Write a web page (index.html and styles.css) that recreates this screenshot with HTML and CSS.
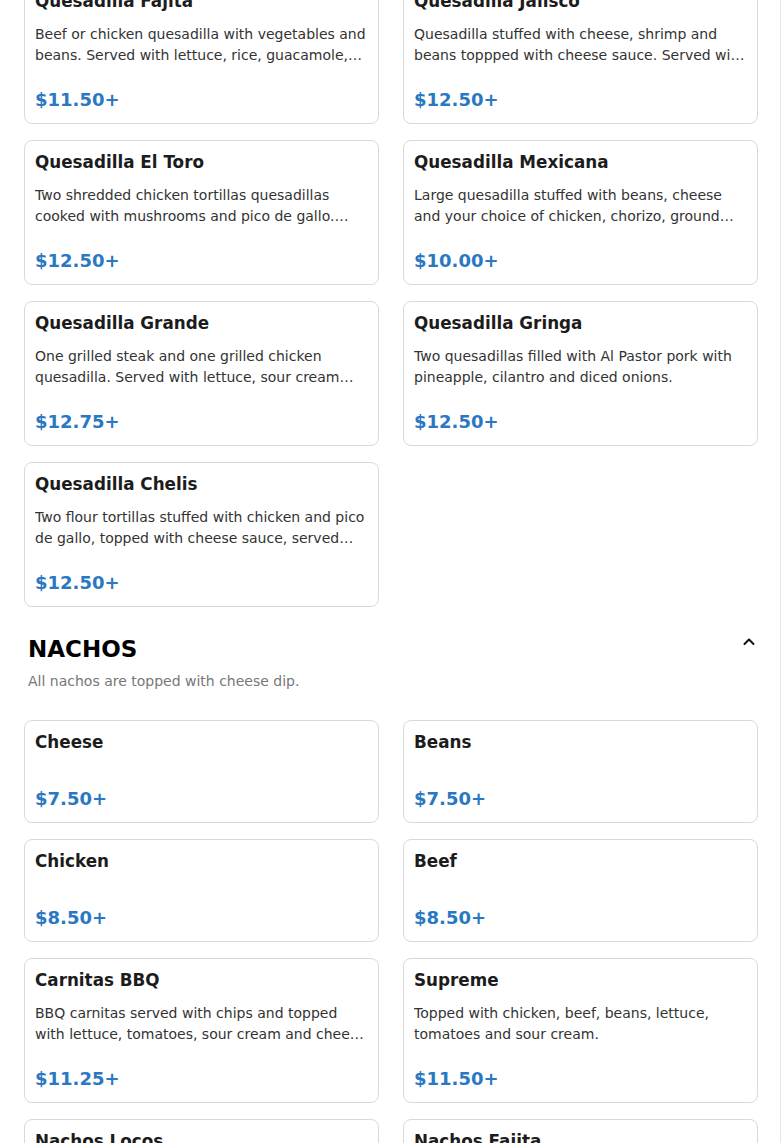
FILE: index.html
```html
<!DOCTYPE html>
<html lang="en">
<head>
<meta charset="utf-8">
<title>Menu</title>
<link rel="stylesheet" href="styles.css">
</head>
<body>
<div class="page">
  <section class="section section-first">
    <div class="grid">
      <div class="card">
        <h3 class="item-title">Quesadilla Fajita</h3>
        <p class="item-desc">Beef or chicken quesadilla with vegetables and beans. Served with lettuce, rice, guacamole, sour cream and pico de gallo.</p>
        <div class="item-price">$11.50+</div>
      </div>
      <div class="card">
        <h3 class="item-title">Quesadilla Jalisco</h3>
        <p class="item-desc">Quesadilla stuffed with cheese, shrimp and beans toppped with cheese sauce. Served with rice and salad.</p>
        <div class="item-price">$12.50+</div>
      </div>
      <div class="card">
        <h3 class="item-title">Quesadilla El Toro</h3>
        <p class="item-desc">Two shredded chicken tortillas quesadillas cooked with mushrooms and pico de gallo. Served with rice and beans.</p>
        <div class="item-price">$12.50+</div>
      </div>
      <div class="card">
        <h3 class="item-title">Quesadilla Mexicana</h3>
        <p class="item-desc">Large quesadilla stuffed with beans, cheese and your choice of chicken, chorizo, ground beef or steak.</p>
        <div class="item-price">$10.00+</div>
      </div>
      <div class="card">
        <h3 class="item-title">Quesadilla Grande</h3>
        <p class="item-desc">One grilled steak and one grilled chicken quesadilla. Served with lettuce, sour cream and pico de gallo.</p>
        <div class="item-price">$12.75+</div>
      </div>
      <div class="card">
        <h3 class="item-title">Quesadilla Gringa</h3>
        <p class="item-desc">Two quesadillas filled with Al Pastor pork with pineapple, cilantro and diced onions.</p>
        <div class="item-price">$12.50+</div>
      </div>
      <div class="card">
        <h3 class="item-title">Quesadilla Chelis</h3>
        <p class="item-desc">Two flour tortillas stuffed with chicken and pico de gallo, topped with cheese sauce, served with rice and beans.</p>
        <div class="item-price">$12.50+</div>
      </div>
    </div>
  </section>

  <section class="section">
    <div class="section-head">
      <div class="section-head-row">
        <h2 class="section-title">NACHOS</h2>
        <button class="collapse" type="button" aria-label="Collapse">
          <svg width="14" height="14" viewBox="0 0 14 14" fill="none" stroke="#111" stroke-width="2" stroke-linecap="round" stroke-linejoin="round"><path d="M2.5 9 L7 4.5 L11.5 9"/></svg>
        </button>
      </div>
      <p class="section-sub">All nachos are topped with cheese dip.</p>
    </div>
    <div class="grid">
      <div class="card">
        <h3 class="item-title">Cheese</h3>
        <div class="item-price">$7.50+</div>
      </div>
      <div class="card">
        <h3 class="item-title">Beans</h3>
        <div class="item-price">$7.50+</div>
      </div>
      <div class="card">
        <h3 class="item-title">Chicken</h3>
        <div class="item-price">$8.50+</div>
      </div>
      <div class="card">
        <h3 class="item-title">Beef</h3>
        <div class="item-price">$8.50+</div>
      </div>
      <div class="card">
        <h3 class="item-title">Carnitas BBQ</h3>
        <p class="item-desc">BBQ carnitas served with chips and topped with lettuce, tomatoes, sour cream and cheese dip.</p>
        <div class="item-price">$11.25+</div>
      </div>
      <div class="card">
        <h3 class="item-title">Supreme</h3>
        <p class="item-desc">Topped with chicken, beef, beans, lettuce, tomatoes and sour cream.</p>
        <div class="item-price">$11.50+</div>
      </div>
      <div class="card">
        <h3 class="item-title">Nachos Locos</h3>
        <p class="item-desc">Chips topped with chicken, beef, chorizo, beans and cheese dip.</p>
        <div class="item-price">$12.50+</div>
      </div>
      <div class="card">
        <h3 class="item-title">Nachos Fajita</h3>
        <p class="item-desc">Grilled steak or chicken with onions, bell peppers and tomatoes.</p>
        <div class="item-price">$12.50+</div>
      </div>
    </div>
  </section>
</div>
</body>
</html>
```

FILE: styles.css
```css
* { box-sizing: border-box; }

html, body {
  margin: 0;
  padding: 0;
  background: #ffffff;
}

body {
  font-family: "DejaVu Sans", "Liberation Sans", sans-serif;
  color: #222;
  overflow: hidden;
}

.page {
  width: 781px;
  border-right: 1px solid #e6e6e6;
  padding: 0 22px 40px 24px;
  margin-top: -21px;
}

.grid {
  display: grid;
  grid-template-columns: 1fr 1fr;
  column-gap: 24px;
  row-gap: 16px;
}

.card {
  display: flex;
  flex-direction: column;
  border: 1px solid #d9d9d9;
  border-radius: 8px;
  padding: 10px 10px 10px;
  background: #fff;
}

.item-title {
  margin: 0;
  font-size: 16.8px;
  line-height: 22px;
  font-weight: bold;
  color: #1c1c1c;
}

.item-desc {
  margin: 12px 0 0;
  font-size: 14px;
  line-height: 21px;
  color: #333;
  display: -webkit-box;
  -webkit-line-clamp: 2;
  -webkit-box-orient: vertical;
  overflow: hidden;
}

.item-price {
  margin-top: 20px;
  font-size: 18px;
  line-height: 27px;
  font-weight: bold;
  color: #2b78c2;
}

.card .item-title + .item-price {
  margin-top: 32px;
}

.section-head {
  padding: 28px 0 0 4px;
  margin-bottom: 28px;
}

.section-head-row {
  display: flex;
  align-items: center;
  justify-content: space-between;
}

.section-title {
  margin: 0;
  font-size: 23px;
  line-height: 28px;
  font-weight: bold;
  color: #000;
}

.collapse {
  border: 0;
  background: transparent;
  padding: 0;
  width: 20px;
  height: 20px;
  display: flex;
  align-items: center;
  justify-content: center;
  margin-top: -15px;
  margin-right: -1px;
  cursor: pointer;
}

.section-sub {
  margin: 8px 0 0;
  font-size: 14px;
  line-height: 21px;
  color: #777;
}
```
